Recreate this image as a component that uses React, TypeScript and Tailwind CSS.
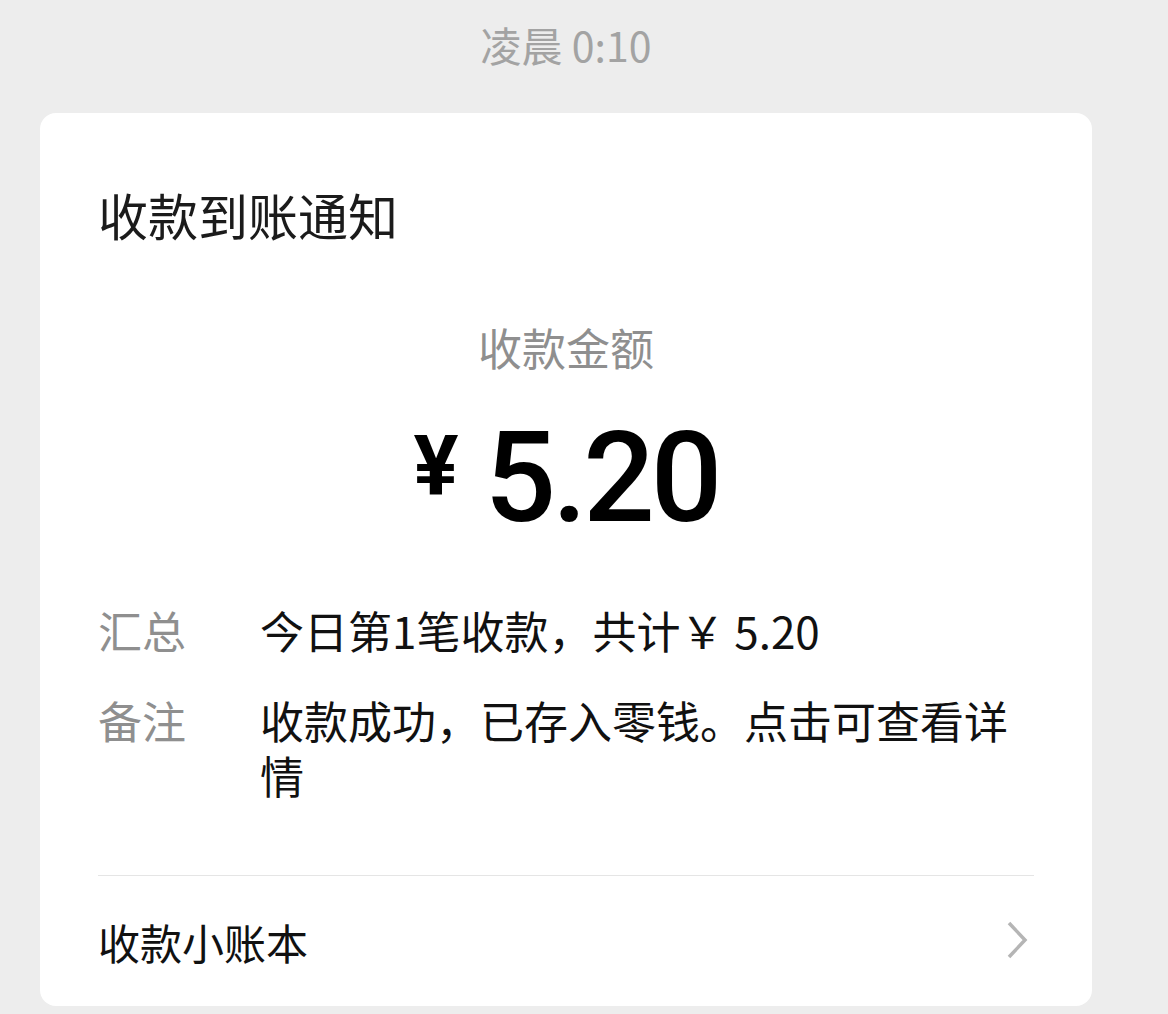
const cjk = "font-['Noto_Sans_CJK_SC','Noto_Sans',sans-serif]";

const rows = [
  { label: "汇总", value: "今日第1笔收款，共计￥ 5.20" },
  { label: "备注", value: "收款成功，已存入零钱。点击可查看详情" },
];

const App = () => {
  return (
    <div className={`min-h-screen w-full bg-[#ededed] ${cjk}`}>
      <div className="mx-[40px] w-[1052px] pt-[24px] text-center text-[41px] leading-[40px] text-[#a3a3a3]">
        凌晨 0:10
      </div>

      <div className="mx-[40px] mt-[49px] w-[1052px] rounded-[16px] bg-white px-[58px] pt-[71px]">
        <div className="text-[50px] leading-[60px] text-[#1b1b1b]">收款到账通知</div>

        <div className="mt-[73px] text-center text-[44px] leading-[60px] text-[#8f8f8f]">
          收款金额
        </div>

        <div className="mt-[22px] flex h-[150px] items-center justify-center text-black">
          <div className="mt-[8px] flex items-start">
            <span className="mt-[2px] mr-[26px] font-['Roboto',sans-serif] text-[84px] leading-[78px] font-bold">
              ¥
            </span>
            <span className="font-['Roboto',sans-serif] text-[126px] leading-[104px] font-medium tracking-[-4px]">
              5.20
            </span>
          </div>
        </div>

        <div className="mt-[54px] flex flex-col gap-[35px]">
          {rows.map((row, i) => (
            <div key={i} className="flex text-[44px] leading-[55px]">
              <div className="w-[162px] shrink-0 text-[#8f8f8f]">{row.label}</div>
              <div className="flex-1 text-[#111]">{row.value}</div>
            </div>
          ))}
        </div>

        <div className="mt-[72px] h-px bg-[#e5e5e5]" />

        <div className="flex h-[130px] items-center justify-between">
          <span className="text-[42px] leading-[55px] text-[#111]">收款小账本</span>
          <svg width="22" height="38" viewBox="0 0 22 38" className="mr-[6px] -mt-[3px]">
            <path d="M3 2 L19 19 L3 36" fill="none" stroke="#b5b5b5" strokeWidth="3.5" />
          </svg>
        </div>
      </div>
    </div>
  );
};

export default App;
